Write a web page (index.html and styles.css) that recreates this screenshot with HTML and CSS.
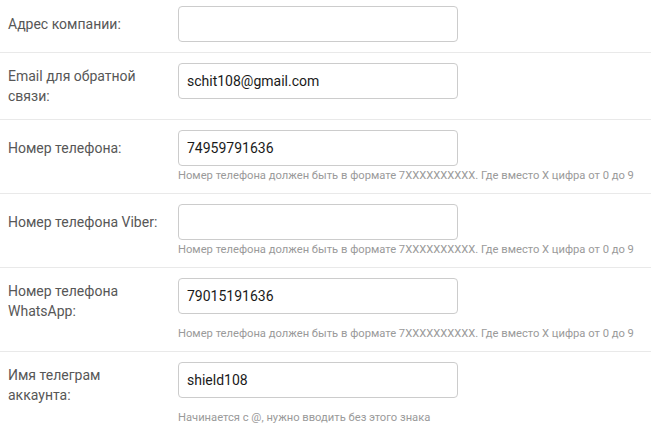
FILE: index.html
```html
<!DOCTYPE html>
<html lang="ru">
<head>
<meta charset="utf-8">
<title>Контакты</title>
<link rel="stylesheet" href="styles.css">
</head>
<body>
<form class="form">
  <div class="row row--first">
    <label class="label">Адрес компании:</label>
    <input class="input" type="text" value="">
  </div>
  <div class="row">
    <label class="label label--multi">Email для обратной связи:</label>
    <input class="input" type="text" value="schit108@gmail.com">
  </div>
  <div class="row">
    <label class="label">Номер телефона:</label>
    <input class="input" type="text" value="74959791636">
    <div class="hint">Номер телефона должен быть в формате 7XXXXXXXXXX. Где вместо X цифра от 0 до 9</div>
  </div>
  <div class="row">
    <label class="label">Номер телефона Viber:</label>
    <input class="input" type="text" value="">
    <div class="hint">Номер телефона должен быть в формате 7XXXXXXXXXX. Где вместо X цифра от 0 до 9</div>
  </div>
  <div class="row">
    <label class="label label--multi">Номер телефона WhatsApp:</label>
    <input class="input" type="text" value="79015191636">
    <div class="hint">Номер телефона должен быть в формате 7XXXXXXXXXX. Где вместо X цифра от 0 до 9</div>
  </div>
  <div class="row row--last">
    <label class="label label--multi">Имя телеграм аккаунта:</label>
    <input class="input" type="text" value="shield108">
    <div class="hint">Начинается с @, нужно вводить без этого знака</div>
  </div>
</form>
</body>
</html>
```
FILE: styles.css
```css
html, body {
  margin: 0;
  padding: 0;
  background: #fff;
}

body {
  font-family: Roboto, "Liberation Sans", sans-serif;
  font-size: 14px;
  color: #555;
}

.form {
  display: flex;
  flex-direction: column;
}

.row {
  display: grid;
  grid-template-columns: 178px 280px;
  align-items: start;
  padding: 10px 0;
  border-bottom: 1px solid #e9e9e9;
}

.row--first {
  padding-top: 6px;
}

.row--last {
  border-bottom: none;
}

.label {
  grid-column: 1;
  grid-row: 1;
  padding: 8px 13px 4px 8px;
  line-height: 20px;
  color: #575757;
}

.label--multi {
  padding-top: 3px;
  padding-bottom: 3px;
}

.input {
  grid-column: 2;
  grid-row: 1;
  box-sizing: border-box;
  width: 280px;
  height: 36px;
  margin: 0;
  padding: 0 8px;
  border: 1px solid #cccccc;
  border-radius: 4px;
  background: #fff;
  font-family: Roboto, "Liberation Sans", sans-serif;
  font-size: 14px;
  color: #1a1a1a;
  outline: none;
}

.hint {
  grid-column: 2;
  grid-row: 2;
  margin-top: 2px;
  font-size: 11.2px;
  line-height: 15px;
  color: #9a9a9a;
  white-space: nowrap;
}
```
